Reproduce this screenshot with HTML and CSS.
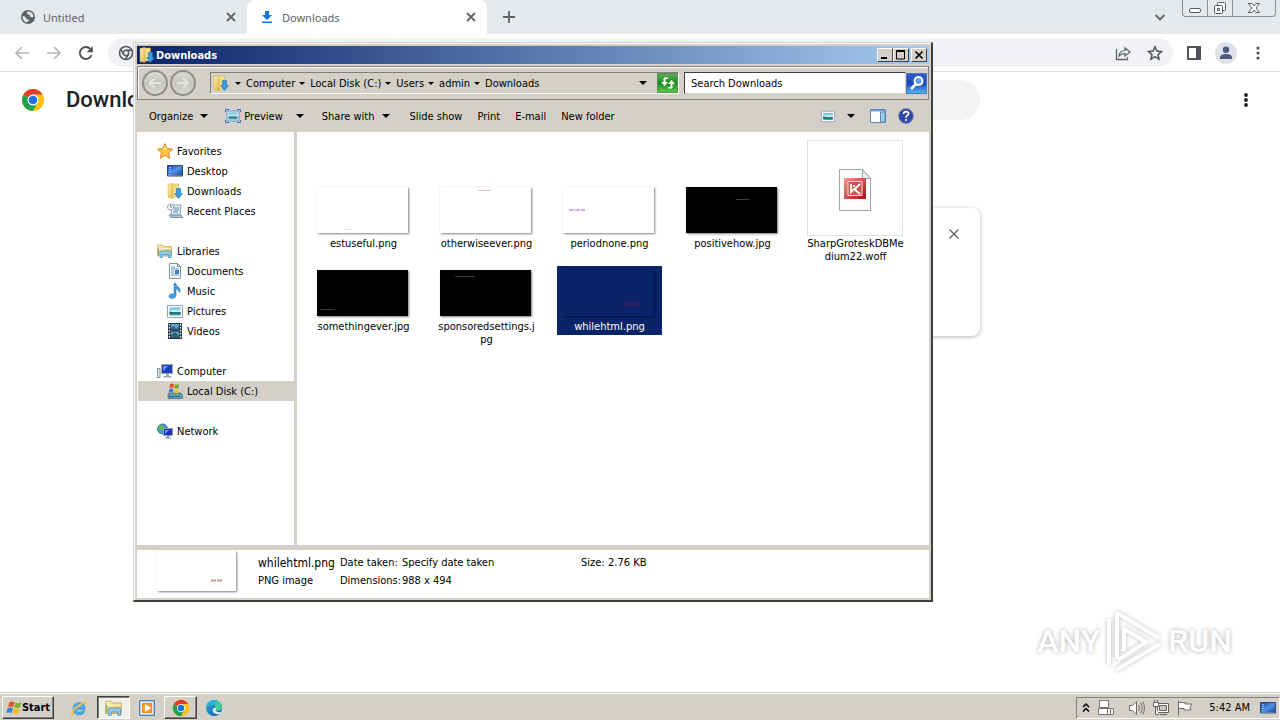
FILE: index.html
```html
<!DOCTYPE html>
<html lang="en">
<head>
    <meta charset="UTF-8">
    <meta name="viewport" content="width=device-width, initial-scale=1.0">
    <title>Downloads</title>
    <link rel="stylesheet" href="styles.css">
</head>
<body>
    <!-- Shared icons -->
    <svg class="sprite" aria-hidden="true">
        <defs>
            <linearGradient id="gFolder" x1="0" y1="0" x2="1" y2="1"><stop offset="0" stop-color="#fff3b0"/><stop offset="1" stop-color="#dfb445"/></linearGradient>
            <linearGradient id="gBlue" x1="0" y1="0" x2="1" y2="1"><stop offset="0" stop-color="#1c3fa8"/><stop offset=".5" stop-color="#4f93e6"/><stop offset="1" stop-color="#173c8c"/></linearGradient>
            <linearGradient id="gSky" x1="0" y1="0" x2="0" y2="1"><stop offset="0" stop-color="#5bb0e8"/><stop offset=".5" stop-color="#d7f1f7"/><stop offset=".6" stop-color="#2c7d76"/><stop offset="1" stop-color="#3c9fc9"/></linearGradient>
            <linearGradient id="gRed" x1="0" y1="0" x2="1" y2="1"><stop offset="0" stop-color="#ee9a92"/><stop offset="1" stop-color="#99150f"/></linearGradient>
            <linearGradient id="gEdge" x1="0" y1="0" x2="1" y2="1"><stop offset="0" stop-color="#2fb4e8"/><stop offset="1" stop-color="#0c4fa0"/></linearGradient>
        </defs>
        <symbol id="downloads" viewBox="0 0 16 16">
            <path d="M5.500 1h6v13h-6z" fill="#f6dc80" stroke="#d2ae4d" stroke-width=".5"/>
            <path d="M1 1.500L6 .3v15.200l-5-1z" fill="url(#gFolder)" stroke="#d2ae4d" stroke-width=".5"/>
            <path d="M9.500 5.500h4v5h2l-4 5-4-5h2z" fill="#3a9be0" stroke="#1c72b8" stroke-width=".6"/>
        </symbol>
        <symbol id="chrome" viewBox="0 0 24 24">
            <circle cx="12" cy="12" r="11" fill="#fbc116"/>
            <path d="M12 12L2.500 6.500a11 11 0 0 1 19 0z" fill="#e33b2e"/>
            <path d="M12 12L2.500 6.500A11 11 0 0 0 12 23l5-9z" fill="#22a04b"/>
            <path d="M12 6.500h9.500A11 11 0 0 1 12 23l5-9z" fill="#fbc116"/>
            <circle cx="12" cy="12" r="5.500" fill="#fff"/>
            <circle cx="12" cy="12" r="4.300" fill="#1a73e8"/>
        </symbol>
        <symbol id="libraries" viewBox="0 0 16 16">
            <path d="M.5 2h5l1 1.500h8V13H.5z" fill="url(#gFolder)" stroke="#b99d46" stroke-width=".6"/>
            <path d="M2 5.500h12" stroke="#fff8cf"/>
            <path d="M3 14.500V9.500Q3 8 4.500 8h8Q14 8 14 9.500v5h-2.500v-3h-6v3z" fill="#8ccbe9" stroke="#4791bd" stroke-width=".7"/>
            <path d="M1.500 5v7" stroke="#67b173"/>
        </symbol>
        <symbol id="picture" viewBox="0 0 16 16">
            <path d="M.5 2.500h15v12H.5z" fill="#fff" stroke="#8ba4b8"/>
            <path d="M2.500 4.500h11v8h-11z" fill="url(#gSky)"/>
            <path d="M2.500 8l3 1.500 3 1 5-1.500v2h-11z" fill="#247063"/>
        </symbol>
        <symbol id="monitor" viewBox="0 0 16 16">
            <path d="M.5 2.500h15v10.500H.5z" fill="url(#gBlue)" stroke="#294579"/>
            <path d="M2 4.500h2M2 6.500h2M2 8.500h2" stroke="#a7cfff" stroke-width=".8"/>
            <path d="M1 13h14" stroke="#8fa2ba"/>
        </symbol>
        <symbol id="winflag" viewBox="0 0 16 16">
            <path d="M3.500 2q2.500-1 5 .2L7.200 7Q4.800 5.800 2 7z" fill="#e8501f"/>
            <path d="M9.500 2.500q2.500 1.300 6-.2L14 7.300q-3 1.300-5.800 0z" fill="#74b72c"/>
            <path d="M1.700 8Q4.500 6.900 7 8l-1.300 5Q3.300 11.800.4 13z" fill="#3a83d6"/>
            <path d="M8 8.300q2.500 1.200 5.800 0L12.400 13.200q-3 1.300-5.700 0z" fill="#f8bd1b"/>
        </symbol>
    </svg>

    <!-- Browser window -->
    <div class="browser">
        <div class="tab-strip">
            <div class="tab">
                <svg class="i16" viewBox="0 0 16 16"><circle cx="8" cy="8" r="7" fill="#5f6368"/><path d="M2.500 7q3 .2 3.500 2t3 1.500q-.2 2-2.500 3Q2.500 12 2.500 7zM8 2.200q-1.800 1.300-.5 2.500T10 6l.5 2 3 .2Q13.500 3 8 2.200z" fill="#e7eaed"/></svg>
                <span>Untitled</span>
                <button class="plain" aria-label="Close tab"><svg class="i16" viewBox="0 0 16 16"><path d="M4 4l8 8M12 4l-8 8" stroke="#5f6368" stroke-width="1.800"/></svg></button>
            </div>
            <div class="tab active">
                <svg class="i16" viewBox="0 0 16 16"><path d="M6 2h4v4h3l-5 5-5-5h3zM3 12.500h10V14H3z" fill="#1a73e8"/></svg>
                <span>Downloads</span>
                <button class="plain" aria-label="Close tab"><svg class="i16" viewBox="0 0 16 16"><path d="M4 4l8 8M12 4l-8 8" stroke="#5f6368" stroke-width="1.800"/></svg></button>
            </div>
            <button class="plain new-tab" aria-label="New tab"><svg class="i16" viewBox="0 0 16 16"><path d="M8 2v12M2 8h12" stroke="#5f6368" stroke-width="1.800"/></svg></button>
            <button class="plain tab-search" aria-label="Search tabs"><svg class="i16" viewBox="0 0 16 16"><path d="M3.500 6L8 10.500 12.500 6" fill="none" stroke="#5f6368" stroke-width="1.900"/></svg></button>
            <div class="frame-buttons">
                <button aria-label="Minimize"><svg viewBox="0 0 16 16"><rect x="2.500" y="8.500" width="11" height="4" rx="1.500" fill="#fff" stroke="#545b64"/></svg></button>
                <button aria-label="Restore"><svg viewBox="0 0 16 16"><rect x="5.500" y="2.500" width="8" height="8" rx="1" fill="#fff" stroke="#545b64"/><rect x="2.500" y="5.500" width="8" height="8" rx="1" fill="#fff" stroke="#545b64"/><path d="M5.500 8.500h2v2h-2z" fill="none" stroke="#545b64"/></svg></button>
                <button class="wide" aria-label="Close"><svg viewBox="0 0 16 16"><path d="M2.500 3.500h3.500l2 2.500 2-2.500h3.500L10 8l3.500 4.500H10L8 10l-2 2.500H2.500L6 8z" fill="#fff" stroke="#545b64"/></svg></button>
            </div>
        </div>

        <div class="toolbar">
            <button class="plain" aria-label="Back"><svg class="i16" viewBox="0 0 16 16"><path d="M15 8H2M8 2L2 8l6 6" fill="none" stroke="#b4b7ba" stroke-width="1.700"/></svg></button>
            <button class="plain" aria-label="Forward"><svg class="i16" viewBox="0 0 16 16"><path d="M1 8h13M8 2l6 6-6 6" fill="none" stroke="#b4b7ba" stroke-width="1.700"/></svg></button>
            <button class="plain" aria-label="Reload"><svg class="i16" viewBox="0 0 16 16"><path d="M13.500 10A6 6 0 1 1 12.400 4" fill="none" stroke="#4d5156" stroke-width="1.900"/><path d="M14.800 1v6.200H8.600z" fill="#4d5156"/></svg></button>
            <div class="omnibox">
                <svg class="i16" viewBox="0 0 16 16"><circle cx="8" cy="8" r="6.500" fill="none" stroke="#55595e" stroke-width="1.600"/><circle cx="8" cy="8" r="2.700" fill="none" stroke="#55595e" stroke-width="1.500"/><path d="M8 5.300h6M5.600 9.300l-3-5M10.300 9.500l-3 5" stroke="#55595e" stroke-width="1.500"/></svg>
                <button class="plain share" aria-label="Share"><svg class="i16" viewBox="0 0 16 16"><path d="M1.500 4v10.500h11V12" fill="none" stroke="#5f6368" stroke-width="1.300"/><path d="M4 11q.5-5.500 6-5.500V2.800L15 7l-5 4V8.300Q6.500 8.200 4 11z" fill="none" stroke="#5f6368" stroke-width="1.200"/></svg></button>
                <button class="plain" aria-label="Bookmark"><svg class="i16" viewBox="0 0 16 16"><path d="M8 1.800l1.900 4.300 4.600.4-3.500 3.100 1.100 4.600L8 11.700l-4.100 2.500L5 9.600 1.500 6.500l4.600-.4z" fill="none" stroke="#50545a" stroke-width="1.500"/></svg></button>
            </div>
            <button class="plain panel" aria-label="Side panel"><svg class="i16" viewBox="0 0 16 16"><path d="M2 2h12v12H2z" fill="none" stroke="#50545a" stroke-width="2"/><path d="M10 2h4v12h-4z" fill="#50545a"/></svg></button>
            <button class="plain avatar" aria-label="Profile"><svg viewBox="0 0 22 22"><circle cx="11" cy="11" r="11" fill="#dfe2e8"/><circle cx="11" cy="7.800" r="3.200" fill="#4e5b7c"/><path d="M5 17v-1.500Q5 12 11 12t6 3.500V17z" fill="#4e5b7c"/></svg></button>
            <button class="plain" aria-label="Menu"><svg class="i16" viewBox="0 0 16 16" fill="#50545a"><circle cx="8" cy="3" r="1.600"/><circle cx="8" cy="8" r="1.600"/><circle cx="8" cy="13" r="1.600"/></svg></button>
        </div>

        <div class="page">
            <header class="page-header">
                <svg class="i24"><use href="#chrome"/></svg>
                <h1>Downloads</h1>
                <input class="page-search" type="search" aria-label="Search downloads">
                <button class="plain" aria-label="More actions"><svg class="i16" viewBox="0 0 16 16" fill="#202124"><circle cx="8" cy="3" r="1.900"/><circle cx="8" cy="8" r="1.900"/><circle cx="8" cy="13" r="1.900"/></svg></button>
            </header>
            <div class="download-card">
                <button class="plain" aria-label="Remove from list"><svg class="i16" viewBox="0 0 16 16"><path d="M3.500 3.500l9 9M12.500 3.500l-9 9" stroke="#5f6368" stroke-width="1.300"/></svg></button>
            </div>
        </div>
    </div>

    <!-- Explorer window -->
    <section class="explorer">
        <div class="title-bar">
            <svg class="i16"><use href="#downloads"/></svg>
            <h2>Downloads</h2>
            <button aria-label="Minimize"><svg viewBox="0 0 12 10"><path d="M2 7h6v2H2z"/></svg></button>
            <button aria-label="Maximize"><svg viewBox="0 0 12 10"><path d="M1.500 1.500h8v7.500h-8z" fill="none" stroke="#000"/><path d="M1 0h9v2H1z"/></svg></button>
            <button class="close" aria-label="Close"><svg viewBox="0 0 12 10"><path d="M2.500 1.500l7 7M9.500 1.500l-7 7" stroke="#000" stroke-width="1.700"/></svg></button>
        </div>

        <div class="nav-bar">
            <div class="history">
                <button aria-label="Back"><svg class="i16" viewBox="0 0 16 16"><path d="M14 8H3M8 3L3 8l5 5" fill="none" stroke="#e6e4e1" stroke-width="2"/></svg></button>
                <button aria-label="Forward"><svg class="i16" viewBox="0 0 16 16"><path d="M2 8h11M8 3l5 5-5 5" fill="none" stroke="#e6e4e1" stroke-width="2"/></svg></button>
            </div>
            <nav class="address">
                <svg class="i16"><use href="#downloads"/></svg>
                <i class="caret small"></i><a href="#">Computer</a>
                <i class="caret small"></i><a href="#">Local Disk (C:)</a>
                <i class="caret small"></i><a href="#">Users</a>
                <i class="caret small"></i><a href="#">admin</a>
                <i class="caret small"></i><a href="#">Downloads</a>
                <button class="plain drop" aria-label="Previous locations"><i class="caret"></i></button>
                <button class="refresh" aria-label="Refresh"><svg class="i16" viewBox="0 0 16 16"><path d="M4.500 3v5M11.500 13V8" stroke="#fff" stroke-width="2"/><path d="M1 7h7l-3.500 4zM8 9h7l-3.500-4zM4 2.500h4v1.500H4zM8 12h4v1.500H8z" fill="#fff"/></svg></button>
            </nav>
            <input class="search" type="text" placeholder="Search Downloads" aria-label="Search Downloads">
            <button class="search-button" aria-label="Search"><svg class="i16" viewBox="0 0 16 16"><circle cx="9.500" cy="6" r="4" fill="#5f9ff0" stroke="#fff" stroke-width="2"/><path d="M7 9l-5 5" stroke="#fff" stroke-width="2.600"/></svg></button>
        </div>

        <div class="command-bar">
            <button class="plain organize">Organize <i class="caret"></i></button>
            <button class="plain preview">
                <svg class="i16" viewBox="0 0 16 16"><path d="M2 3h12v10H2z" fill="#eef6fc" stroke="#5b8ec9"/><path d="M3.500 4.500h9v7h-9z" fill="url(#gSky)"/><path d="M.5 4V1.500H4M12 1.500h3.500V4M.5 12v2.500H4M12 14.500h3.500V12" fill="none" stroke="#3f6fc0"/></svg>
                Preview
            </button>
            <button class="plain preview-more" aria-label="Preview options"><i class="caret"></i></button>
            <button class="plain share-with">Share with <i class="caret"></i></button>
            <button class="plain">Slide show</button>
            <button class="plain">Print</button>
            <button class="plain">E-mail</button>
            <button class="plain">New folder</button>
            <div class="view-tools">
                <button class="plain" aria-label="Change view"><svg class="i16"><use href="#picture"/></svg></button>
                <button class="plain more-views" aria-label="More views"><i class="caret"></i></button>
                <button class="plain pane" aria-label="Preview pane"><svg class="i16" viewBox="0 0 16 16"><path d="M.5 1.500h15v13H.5z" fill="#fff" stroke="#5888b0"/><path d="M1 2h14v1.500H1z" fill="#6fa8d8"/><path d="M10.500 4h4.500v10h-4.500z" fill="#9fd0ec" stroke="#5888b0"/></svg></button>
                <button class="plain help" aria-label="Help"><svg class="i16" viewBox="0 0 16 16"><circle cx="8" cy="8" r="7.400" fill="#2d49a8" stroke="#7d8bb0"/><path d="M5.500 6Q5.700 3.500 8.300 3.600q2.400.2 2.300 2.200Q10.500 7 9 7.800 8 8.500 8 9.700" fill="none" stroke="#fff" stroke-width="1.700"/><circle cx="8" cy="12" r="1.100" fill="#fff"/></svg></button>
            </div>
        </div>

        <div class="panes">
            <nav class="tree">
                <ul>
                    <li><a href="#"><svg class="i16" viewBox="0 0 16 16"><path d="M8 .7l2.200 5 5.300.4-4 3.700 1.200 5.400L8 12.300l-4.700 2.900 1.200-5.400-4-3.700 5.300-.4z" fill="#fdcb38" stroke="#d97716" stroke-width=".9"/><path d="M8 3l1.500 3.600L6 7z" fill="#fff1a0"/></svg>Favorites</a>
                        <ul>
                            <li><a href="#"><svg class="i16"><use href="#monitor"/></svg>Desktop</a></li>
                            <li><a href="#"><svg class="i16"><use href="#downloads"/></svg>Downloads</a></li>
                            <li><a href="#"><svg class="i16" viewBox="0 0 16 16"><path d="M5 2h9l-1 10H4z" fill="#e7f0f7" stroke="#6f8aa5" stroke-width=".8"/><path d="M7 5h5M7 7h5M6 9h5" stroke="#4b83bf"/><path d="M2 12h12l1.500 2.500h-12z" fill="#b6c8d8" stroke="#67809a" stroke-width=".8"/><circle cx="3.500" cy="4" r="3" fill="#fff" stroke="#8a97a5" stroke-width=".9"/><path d="M3.500 2v2H5" fill="none" stroke="#555" stroke-width=".8"/></svg>Recent Places</a></li>
                        </ul>
                    </li>
                    <li><a href="#"><svg class="i16"><use href="#libraries"/></svg>Libraries</a>
                        <ul>
                            <li><a href="#"><svg class="i16" viewBox="0 0 16 16"><path d="M2.500.5h8l3 3v12h-11z" fill="#fff" stroke="#7a91a8"/><path d="M4 4h4M4 6h8M4 8h3M4 10h3M4 12h8" stroke="#5b94ca"/><path d="M8 7h4v4H8z" fill="#477cc0"/><path d="M10.500.5v3h3" fill="none" stroke="#7a91a8"/></svg>Documents</a></li>
                            <li><a href="#"><svg class="i16" viewBox="0 0 16 16"><path d="M7 11V0h1.500q.5 3 3.500 4.500 2 1.500.5 5Q12 6.500 9 6v6.500Q8.500 15.500 5 15.500q-3-.2-3-2.300Q2.800 10 7 11z" fill="#3f9fe0" stroke="#1b6dad" stroke-width=".5"/></svg>Music</a></li>
                            <li><a href="#"><svg class="i16"><use href="#picture"/></svg>Pictures</a></li>
                            <li><a href="#"><svg class="i16" viewBox="0 0 16 16"><path d="M1 0h14v16H1z" fill="#253847"/><path d="M4 1h8v6H4zM4 8.500h8V15H4z" fill="#5aa4cb"/><path d="M4 5l3-2 2 3 3-3v4H4zM4 12l4-3 4 4v2H4z" fill="#335d74"/><path d="M2.500 1v14M13.500 1v14" stroke="#fff" stroke-width="1.300" stroke-dasharray="1.500 1.500"/></svg>Videos</a></li>
                        </ul>
                    </li>
                    <li><a href="#"><svg class="i16" viewBox="0 0 16 16"><path d="M.5 5.500h2.500v9H.5z" fill="#e3e6ea" stroke="#8d959f"/><path d="M4.500 1.500h11v9h-11z" fill="#1e3fc0" stroke="#9aa6b8"/><path d="M6 3h5L6 8z" fill="#6e94f0"/><path d="M9 11h3v2h2.500v1.500h-8V13H9z" fill="#a0a9b8"/></svg>Computer</a>
                        <ul>
                            <li class="current"><a href="#"><svg class="i16" viewBox="0 0 16 16"><path d="M2 10h12l2 3v2.500H1V12z" fill="#63a4ae" stroke="#44636c" stroke-width=".7"/><path d="M2 13.500h12" stroke="#263f9a" stroke-dasharray="2 1"/><path d="M3 1q2-1 4 0L6.500 5Q4.500 4 2.500 5z" fill="#e8501f"/><path d="M8 1.300q2 1 4-.2L11.500 5q-2 1-4 .2z" fill="#6fb02c"/><path d="M2.300 6q2-1 4 0L5.800 9.500q-2-1-4 0z" fill="#3a78d6"/><path d="M7.300 6.200q2 1 4-.2L11 9.700q-2 1-4 .1z" fill="#f8bd1b"/></svg>Local Disk (C:)</a></li>
                        </ul>
                    </li>
                    <li><a href="#"><svg class="i16" viewBox="0 0 16 16"><circle cx="5.500" cy="6" r="5" fill="#3d9ddd" stroke="#1c619c" stroke-width=".8"/><path d="M3 2q4 0 4 2.500T4 7 2 9Q0 5 3 2z" fill="#62bb53"/><path d="M6.500 5.500h9v7h-9z" fill="#1b34b8" stroke="#8f9bb2"/><path d="M8 7h4l-4 4z" fill="#6d91ee"/><path d="M10 13h2v1.500h2v1H8v-1h2z" fill="#7d899d"/></svg>Network</a></li>
                </ul>
            </nav>

            <ul class="files">
                <li class="file tall"><div class="thumb"><svg viewBox="0 0 91 46"><path d="M27 42.500h7" stroke="#ddd"/></svg></div>estuseful.png</li>
                <li class="file tall"><div class="thumb"><svg viewBox="0 0 91 46"><path d="M38 3.500h13" stroke="#f0bfc3"/></svg></div>otherwiseever.png</li>
                <li class="file tall"><div class="thumb"><svg viewBox="0 0 91 46"><path d="M6 23h16" stroke="#d9a9ea" stroke-width="2" stroke-dasharray="5 1"/></svg></div>periodnone.png</li>
                <li class="file tall"><div class="thumb"><svg class="black" viewBox="0 0 91 46"><path d="M50 12.500h13" stroke="#2f473c"/></svg></div>positivehow.jpg</li>
                <li class="file tall"><div class="thumb framed"><svg viewBox="0 0 32 42"><path d="M.5.500h23l8 9v32H.5z" fill="#fafbfb" stroke="#9fa6a6"/><path d="M23.500.5v9h8z" fill="#e8ebeb" stroke="#9fa6a6"/><path d="M5 9h22v21H5z" fill="url(#gRed)"/><path d="M9 12.500h14v14H9z" fill="#c9544b" stroke="#f8d8d5"/><path d="M12 15v8l3-3 6 5M14 17h2M15 21l6-6" fill="none" stroke="#fff" stroke-width="1.800"/></svg></div>SharpGroteskDBMedium22.woff</li>
                <li class="file"><div class="thumb"><svg class="black" viewBox="0 0 91 46"><path d="M3 39.500h15" stroke="#383838"/></svg></div>somethingever.jpg</li>
                <li class="file"><div class="thumb"><svg class="black" viewBox="0 0 91 46"><path d="M15 6.500h20" stroke="#383838"/></svg></div>sponsoredsettings.jpg</li>
                <li class="file selected"><div class="thumb"><svg viewBox="0 0 91 46"><path d="M61 34h16" stroke="#351b5c" stroke-width="3"/></svg></div>whilehtml.png</li>
            </ul>
        </div>

        <div class="details">
            <div class="thumb"><svg viewBox="0 0 79 40"><path d="M54 29.500h12" stroke="#dd8f98" stroke-width="2" stroke-dasharray="5 1"/></svg></div>
            <div class="name"><strong>whilehtml.png</strong><span>PNG image</span></div>
            <dl>
                <dt>Date taken:</dt><dd>Specify date taken</dd>
                <dt>Dimensions:</dt><dd>988 x 494</dd>
            </dl>
            <dl><dt>Size:</dt><dd>2.76 KB</dd></dl>
        </div>
    </section>

    <!-- Watermark -->
    <div class="watermark">
        <span>ANY</span>
        <svg viewBox="0 0 60 64" fill="none" stroke="#fff" stroke-width="4" stroke-linejoin="round">
            <path d="M13 50V4l42 25M5 56V10M20 42V20l22 13-28 18M12 61l44-26"/>
        </svg>
        <span>RUN</span>
    </div>

    <!-- Taskbar -->
    <footer class="taskbar">
        <button class="raised start"><svg class="i16"><use href="#winflag"/></svg>Start</button>
        <div class="quick">
            <button class="plain" aria-label="Internet Explorer"><svg class="i18" viewBox="0 0 18 18"><path d="M15 10.500H6q.4 2.500 3.500 2.500 2 0 3-1.200h2.300Q13.500 16 9.300 16 3 15.700 3 9.700 3.300 3.700 9.200 3.500q6 .2 5.800 7zM6 8.200h6Q11.600 5.800 9 5.800q-2.700.1-3 2.400z" fill="#45ace8" stroke="#2583c4" stroke-width=".5"/><path d="M1.500 16.500Q0 13 6 7.500q7.500-6 10.500-4.500 1 1-.3 3.300.2-2.300-2.700-1.500Q9 6.500 5 11T4 15.500q-1.500 1.600-2.500 1z" fill="#edc04a"/></svg></button>
            <button class="pressed" aria-label="Windows Explorer"><svg class="i18"><use href="#libraries"/></svg></button>
            <button class="plain" aria-label="Media Player"><svg class="i16" viewBox="0 0 16 16"><path d="M.5.500h15v15H.5z" fill="#a9cdec" stroke="#4d83b3"/><path d="M2.500 2.500h11v11h-11z" fill="#f1861e" stroke="#fff" stroke-width=".7"/><circle cx="8" cy="8" r="4.500" fill="#f8a23a"/><path d="M6 4.300L12 8l-6 3.700z" fill="#fff"/></svg></button>
            <button class="raised" aria-label="Chrome"><svg class="i18"><use href="#chrome"/></svg></button>
            <button class="plain" aria-label="Edge"><svg class="i16" viewBox="0 0 16 16"><circle cx="8" cy="8" r="8" fill="url(#gEdge)"/><path d="M.2 7Q1.500 0 8.500 0 15 .5 16 6.500q.2 4-4.500 4.200-3-.2-1.700-1.900Q10.500 5.500 7 5 2.500 4.700.2 7z" fill="#45c99a"/><path d="M.2 7Q1.500 0 8.500 0q2 .2 3.500 1Q8 2 9 5.700 7 4.500 4.500 5 1.500 5.500.2 7z" fill="#2bb0df"/><path d="M10 9q-1.300 2 1.800 3 2 .5 3.500-.5-1 2-3 2.800Q7 14 6.500 10.500q.2-3 3.200-3 1 .5.3 1.500z" fill="#d9edf8"/></svg></button>
        </div>
        <div class="tray">
            <button class="plain" aria-label="Show hidden icons"><svg viewBox="0 0 8 12"><path d="M1 5l3-3 3 3M1 9.500l3-3 3 3" fill="none" stroke="#000" stroke-width="1.500"/></svg></button>
            <svg class="i16" viewBox="0 0 16 16" fill="#fff" stroke="#77736c"><path d="M1.500.5h9v7h-9zM.5 8.500h9v6h-9zM9.500 8.500h3v6h-3zM12.500 8.500h3v6h-3z"/></svg>
            <svg class="i16 sound" viewBox="0 0 16 16" fill="none" stroke="#716d66"><path d="M.5 5.500h3l4-4v13l-4-4h-3z" fill="#fff"/><path d="M9.500 5q2 3 0 6M11.500 3q3.500 5 0 10M13.500 1.500q4 6.500 0 13"/></svg>
            <svg class="i16" viewBox="0 0 16 16" fill="#fff" stroke="#66625c"><path d="M4.500 3.500h11v9h-11z"/><path d="M6.500 5.500h7v5h-7z" fill="#cac7c0"/><path d="M7 14.500h7M2.500 7v7.500H6M.5 2.500h5v4h-5zM1.500 0v2M4.500 0v2"/></svg>
            <svg class="i16" viewBox="0 0 16 16" fill="#fff" stroke="#716d66"><path d="M1.500 1v14.500M1.500 2.500h6.500v1.500h7l-2 3 1 3H7V8.500H1.500z"/></svg>
            <time>5:42 AM</time>
            <button class="plain" aria-label="Show desktop"><svg class="i16"><use href="#monitor"/></svg></button>
        </div>
    </footer>
</body>
</html>
```
FILE: styles.css
```css
* {
    box-sizing: border-box;
}
body {
    margin: 0;
    min-height: 100vh;
    display: flex;
    flex-direction: column;
    position: relative;
    overflow: hidden;
    background: #fff;
    color: #000;
    font-family: "DejaVu Sans Condensed", "Noto Sans", sans-serif;
    font-size: 11px;
    line-height: 13px;
}
h1, h2, ul, dl, dd {
    margin: 0;
    padding: 0;
}
ul {
    list-style: none;
}
a {
    color: inherit;
    text-decoration: none;
}
button, input {
    font: inherit;
    color: inherit;
    padding: 0;
    margin: 0;
}
svg {
    display: block;
    flex: none;
}
.sprite {
    position: absolute;
    width: 0;
    height: 0;
}
.i16 {
    width: 16px;
    height: 16px;
}
.i18 {
    width: 18px;
    height: 18px;
}
.i24 {
    width: 24px;
    height: 24px;
}
.plain {
    display: flex;
    align-items: center;
    border: none;
    background: none;
}
.caret {
    border: 4px solid transparent;
    border-top-color: #000;
    border-bottom: none;
}
.caret.small {
    margin: 0 1px 0 0;
    border-width: 3px;
    border-bottom: none;
}

/* Browser */
.browser {
    flex: 1;
    display: flex;
    flex-direction: column;
    font-family: "Noto Sans", sans-serif;
}
.tab-strip {
    display: flex;
    align-items: center;
    height: 34px;
    padding-right: 4px;
    background: #e6e9ec;
}
.tab {
    display: flex;
    align-items: center;
    width: 240px;
    height: 34px;
    padding: 0 8px 0 12px;
    color: #5f6368;
}
.tab:first-child {
    width: 247px;
    padding-left: 20px;
}
.tab.active {
    background: #fff;
    border-radius: 8px 8px 0 0;
}
.tab span {
    flex: 1;
    margin-left: 7px;
}
.new-tab {
    margin-left: 14px;
}
.tab-search {
    margin-left: auto;
    margin-right: 14px;
}
.frame-buttons {
    display: flex;
    align-self: flex-start;
    height: 17px;
    border: 1px solid #8b9198;
    border-top: none;
    border-radius: 0 0 4px 4px;
}
.frame-buttons button {
    display: flex;
    justify-content: center;
    width: 25px;
    border: none;
    border-right: 1px solid #8b9198;
    background: none;
}
.frame-buttons .wide {
    width: 42px;
    border: none;
}
.frame-buttons svg {
    width: 16px;
    height: 16px;
}
.toolbar {
    display: flex;
    align-items: center;
    gap: 16px;
    height: 38px;
    padding: 0 14px;
    border-bottom: 1px solid #dadce0;
}
.omnibox {
    flex: 1;
    display: flex;
    align-items: center;
    gap: 16px;
    height: 29px;
    margin-left: -2px;
    padding: 0 10px;
    border-radius: 15px;
    background: #f0f2f5;
}
.share {
    margin-left: auto;
}
.panel {
    margin-right: -3px;
    margin-left: -3px;
}
.avatar {
    margin-right: -3px;
}
.avatar svg {
    width: 22px;
    height: 22px;
}
.page-header {
    display: grid;
    grid-template-columns: 24px 1fr 676px 1fr 16px;
    align-items: center;
    height: 56px;
    padding: 0 26px 0 21px;
}
.page-header .plain {
    grid-column: 5;
}
.page-header h1 {
    padding-left: 21px;
    font-family: Roboto, sans-serif;
    font-size: 22px;
    line-height: 28px;
    font-weight: 500;
    color: #202124;
}
.page-search {
    height: 40px;
    padding: 0 20px;
    border: none;
    border-radius: 20px;
    background: #f1f3f4;
}
.download-card {
    display: flex;
    justify-content: flex-end;
    align-items: flex-start;
    width: 680px;
    height: 128px;
    margin: 80px auto 0;
    padding: 18px;
    border-radius: 8px;
    box-shadow: 0 1px 4px rgba(0, 0, 0, 0.3);
}

/* Explorer window */
.explorer {
    position: absolute;
    top: 42px;
    right: 347px;
    bottom: 118px;
    left: 133px;
    display: flex;
    flex-direction: column;
    padding: 3px 2px 2px 3px;
    border: 1px solid #d4d0c8;
    border-right: 2px solid #404040;
    border-bottom: 2px solid #404040;
    background: #d4d0c8;
    box-shadow: inset 1px 1px #fff;
}
.title-bar {
    display: flex;
    align-items: center;
    height: 18px;
    padding: 0 2px;
    background: linear-gradient(to right, #0a246a, #a6caf0);
    color: #fff;
}
.title-bar h2 {
    flex: 1;
    margin-left: 1px;
    font-size: 11px;
}
.title-bar button {
    width: 16px;
    height: 14px;
    border: 1px solid;
    border-color: #fff #404040 #404040 #fff;
    background: #d4d0c8;
}
.title-bar svg:not(.i16) {
    width: 12px;
    height: 10px;
    margin: auto;
}
.title-bar .close {
    margin-left: 2px;
}
.nav-bar {
    display: flex;
    align-items: center;
    height: 34px;
    margin-top: 2px;
    padding: 0 1px 0 4px;
    border: 1px solid #808080;
    box-shadow: inset 1px 1px #fff;
}
.history {
    display: flex;
    gap: 2px;
    margin-right: 14px;
}
.history button {
    display: grid;
    place-items: center;
    width: 26px;
    height: 26px;
    border: 2px solid #8f8e8b;
    border-radius: 50%;
    background: linear-gradient(#dddbd8, #c6c4c0 50%, #d8d6d2);
}
.address {
    flex: 1;
    display: flex;
    align-items: center;
    gap: 4px;
    height: 22px;
    margin-right: 5px;
    padding-left: 2px;
    border: 1px solid;
    border-color: #808080 #fff #fff #808080;
}
.address > .i16 {
    margin-right: 2px;
}
.drop {
    margin-left: auto;
    margin-right: 6px;
}
.refresh {
    display: grid;
    place-items: center;
    width: 21px;
    height: 20px;
    border: 1px solid #5c8f55;
    background: linear-gradient(#59ac55, #168a1c 50%, #57c64c);
}
.search {
    width: 222px;
    height: 22px;
    padding: 0 6px;
    border: 1px solid;
    border-color: #404040 #d4d0c8 #d4d0c8 #404040;
    background: #fff;
}
.search::placeholder {
    color: #000;
    opacity: 1;
}
.search-button {
    display: grid;
    place-items: center;
    width: 21px;
    height: 21px;
    border: 1px solid #4b78b9;
    background: linear-gradient(#2f5bd0, #1b46c0 50%, #52b6ee);
}
.command-bar {
    display: flex;
    align-items: center;
    gap: 15px;
    height: 32px;
    padding: 0 15px 0 12px;
}
.organize, .share-with {
    gap: 7px;
}
.organize {
    margin-right: 2px;
}
.share-with {
    margin-right: 5px;
}
.preview {
    gap: 3px;
}
.preview-more {
    margin-right: 3px;
    margin-left: -2px;
}
.view-tools {
    display: flex;
    align-items: center;
    gap: 12px;
    margin-left: auto;
}
.view-tools .plain:first-child .i16 {
    width: 14px;
}
.more-views {
    margin-right: 3px;
}
.panes {
    flex: 1;
    display: flex;
    min-height: 0;
}
.tree {
    width: 160px;
    padding: 9px 0 0 1px;
    border-right: 3px solid #d4d0c8;
    background: #fff;
}
.tree a {
    display: flex;
    align-items: center;
    gap: 4px;
    height: 20px;
    padding-left: 19px;
}
.tree > ul > li {
    margin-bottom: 20px;
}
.tree li li a {
    padding-left: 29px;
}
.tree .current {
    background: #d4d0c8;
}
.files {
    flex: 1;
    display: grid;
    grid-template-columns: repeat(auto-fill, 105px);
    align-content: start;
    align-items: start;
    gap: 1px 18px;
    padding: 4px 0 0 14px;
    background: #fff;
}
.file {
    padding: 4px 4px 2px;
    text-align: center;
    overflow-wrap: anywhere;
}
.file .thumb {
    display: flex;
    justify-content: center;
    align-items: flex-end;
    height: 50px;
    padding: 0 2px 4px 0;
}
.file.tall .thumb {
    height: 97px;
}
.file .thumb svg {
    width: 91px;
    height: 46px;
}
.thumb svg {
    background: #fff;
    box-shadow: 1px 1px 2px rgba(0, 0, 0, 0.5);
}
.thumb svg.black {
    background: #000;
}
.file.tall .framed {
    align-items: center;
    height: 96px;
    margin: 0 1px 1px 0;
    padding: 4px 0 0;
    border: 1px solid #dbe2e4;
}
.file .framed svg {
    width: 32px;
    height: 42px;
    background: none;
    box-shadow: none;
}
.file.selected {
    background: #0a246a;
    color: #fff;
}
.file.selected svg {
    background: #0a246a;
}
.details {
    display: flex;
    align-items: flex-start;
    height: 53px;
    padding: 1px 0 0 20px;
    border-top: 5px solid #d4d0c8;
    background: #fff;
    line-height: 18px;
}
.details .thumb svg {
    width: 79px;
    height: 40px;
}
.details .name {
    width: 82px;
    margin-left: 22px;
    padding-top: 3px;
}
.details strong, .details span {
    display: block;
    font-weight: normal;
}
.details strong {
    font-size: 12px;
    white-space: nowrap;
}
.details dl {
    display: grid;
    grid-template-columns: 62px 179px;
    padding-top: 3px;
}
.details dl + dl {
    grid-template-columns: 27px 1fr;
}

/* Watermark laid over the desktop */
.watermark {
    position: absolute;
    right: 48px;
    bottom: 47px;
    display: flex;
    align-items: center;
    gap: 4px;
    color: #fff;
    font-family: Roboto, sans-serif;
    font-size: 32px;
    font-weight: 500;
    line-height: 64px;
    text-shadow: 0 0 4px #aaa;
}
.watermark svg {
    width: 60px;
    height: 64px;
    filter: drop-shadow(0 0 2px #bbb);
}

/* Taskbar */
.taskbar {
    display: flex;
    align-items: center;
    height: 28px;
    padding: 2px 0 0 2px;
    border-top: 1px solid #d4d0c8;
    box-shadow: inset 0 1px #fff;
    background: #d4d0c8;
}
.raised, .pressed {
    display: flex;
    align-items: center;
    justify-content: center;
    width: 33px;
    height: 23px;
    border: 1px solid;
    border-color: #fff #404040 #404040 #fff;
    background: #d4d0c8;
    box-shadow: inset -1px -1px #808080;
}
.pressed {
    border-color: #404040 #fff #fff #404040;
    background: #f2f0ed;
    box-shadow: inset 1px 1px #808080;
}
.start {
    width: 52px;
    font-weight: bold;
}
.quick {
    display: flex;
    align-items: center;
    gap: 9px;
    margin-left: 16px;
}
.tray {
    display: flex;
    align-items: center;
    gap: 8px;
    height: 22px;
    margin-left: auto;
    padding: 0 3px 0 5px;
    border: 1px solid;
    border-color: #808080 #fff #fff #808080;
}
.tray button svg:not(.i16) {
    width: 8px;
    height: 12px;
}
.tray .sound {
    margin-left: 7px;
}
.tray time {
    margin: 0 2px 0 8px;
}
```
